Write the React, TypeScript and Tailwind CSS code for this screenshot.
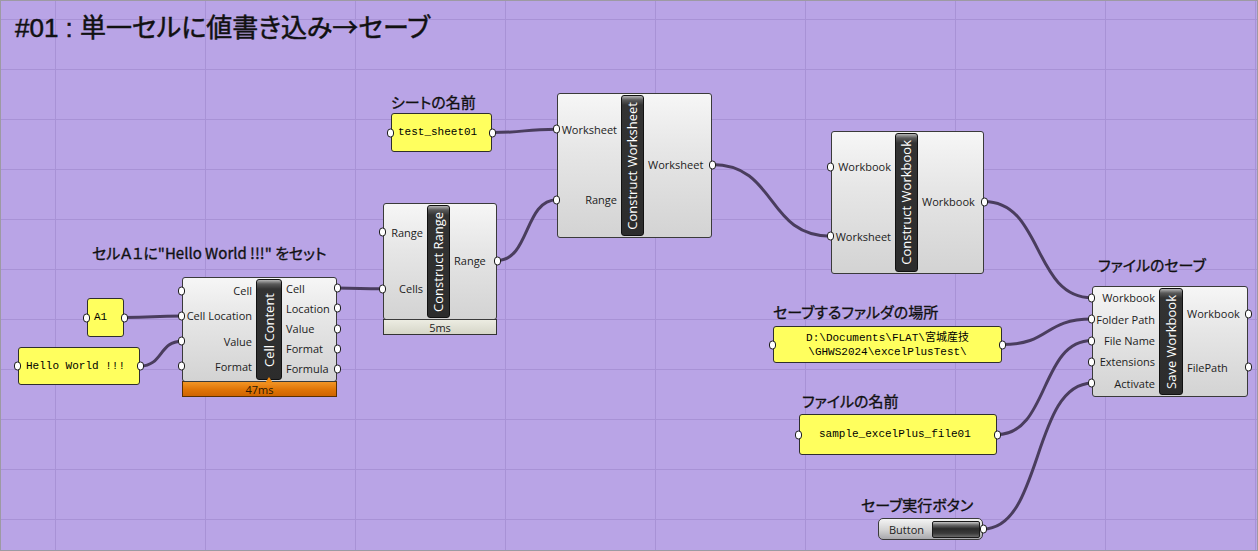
import React from 'react';

type Comp = {
  id: string;
  x: number;
  y: number;
  w: number;
  h: number;
  leftW: number;
  stripW: number;
  title: string;
  inputs: string[];
  outputs: string[];
  bar?: { text: string; kind: 'orange' | 'gray' };
  marker?: boolean;
};

const comps: Comp[] = [
  { id: 'cc', x: 182, y: 277, w: 155, h: 105, leftW: 74, stripW: 26, title: 'Cell Content', inputs: ['Cell', 'Cell Location', 'Value', 'Format'], outputs: ['Cell', 'Location', 'Value', 'Format', 'Formula'], bar: { text: '47ms', kind: 'orange' }, marker: true },
  { id: 'cr', x: 383, y: 203, w: 114, h: 117, leftW: 44, stripW: 23, title: 'Construct Range', inputs: ['Range', 'Cells'], outputs: ['Range'], bar: { text: '5ms', kind: 'gray' } },
  { id: 'cw', x: 557, y: 93, w: 155, h: 145, leftW: 64, stripW: 23, title: 'Construct Worksheet', inputs: ['Worksheet', 'Range'], outputs: ['Worksheet'] },
  { id: 'cb', x: 831, y: 131, w: 153, h: 143, leftW: 64, stripW: 23, title: 'Construct Workbook', inputs: ['Workbook', 'Worksheet'], outputs: ['Workbook'] },
  { id: 'sw', x: 1092, y: 286, w: 156, h: 111, leftW: 67, stripW: 24, title: 'Save Workbook', inputs: ['Workbook', 'Folder Path', 'File Name', 'Extensions', 'Activate'], outputs: ['Workbook', 'FilePath'] },
];

type Panel = { x: number; y: number; w: number; h: number; lines: string[]; pl?: number };

const panels: Panel[] = [
  { x: 391, y: 113, w: 101, h: 39, lines: ['test_sheet01'], pl: 6 },
  { x: 87, y: 298, w: 37, h: 39, lines: ['A1'], pl: 6 },
  { x: 18, y: 347, w: 122, h: 38, lines: ['Hello World !!!'], pl: 7 },
  { x: 773, y: 326, w: 229, h: 37, lines: ['D:\\Documents\\FLAT\\宮城産技', '\\GHWS2024\\excelPlusTest\\'] },
  { x: 799, y: 414, w: 198, h: 41, lines: ['sample_excelPlus_file01'], pl: 19 },
];

const button = { x: 878, y: 518, w: 105, h: 22 };

const scribbles = [
  { x: 391, y: 94, text: 'シートの名前' },
  { x: 92, y: 245, text: 'セルＡ１に"Hello World !!!" をセット' },
  { x: 773, y: 304, text: 'セーブするファルダの場所' },
  { x: 802, y: 393, text: 'ファイルの名前' },
  { x: 861, y: 497, text: 'セーブ実行ボタン' },
  { x: 1098, y: 257, text: 'ファイルのセーブ' },
];

const byId = (id: string) => comps.find((c) => c.id === id)!;
const inPort = (id: string, i: number): [number, number] => {
  const c = byId(id);
  return [c.x, c.y + 1 + ((c.h - 4) * (i + 0.5)) / c.inputs.length];
};
const outPort = (id: string, i: number): [number, number] => {
  const c = byId(id);
  return [c.x + c.w, c.y + 1 + ((c.h - 4) * (i + 0.5)) / c.outputs.length];
};
const panelOut = (i: number): [number, number] => {
  const p = panels[i];
  return [p.x + p.w, p.y + p.h / 2];
};

const wires: [[number, number], [number, number]][] = [
  [panelOut(0), inPort('cw', 0)],
  [outPort('cr', 0), inPort('cw', 1)],
  [panelOut(1), inPort('cc', 1)],
  [panelOut(2), inPort('cc', 2)],
  [outPort('cc', 0), inPort('cr', 1)],
  [outPort('cw', 0), inPort('cb', 1)],
  [outPort('cb', 0), inPort('sw', 0)],
  [panelOut(3), inPort('sw', 1)],
  [panelOut(4), inPort('sw', 2)],
  [[button.x + button.w, button.y + button.h / 2], inPort('sw', 4)],
];

function wirePath([x1, y1]: [number, number], [x2, y2]: [number, number]) {
  const d = Math.max(Math.abs(x2 - x1) * 0.55, 10);
  return `M ${x1} ${y1} C ${x1 + d} ${y1}, ${x2 - d} ${y2}, ${x2} ${y2}`;
}

function Grip({ side }: { side: 'in' | 'out' }) {
  return (
    <div
      className={
        'absolute top-1/2 -translate-y-1/2 w-[7px] h-[9px] rounded-full border-[1.5px] border-[#1e1e1e] bg-white ' +
        (side === 'in' ? 'left-[-5px]' : 'right-[-5px]')
      }
    />
  );
}

function Component({ c }: { c: Comp }) {
  return (
    <div className="absolute flex flex-col" style={{ left: c.x, top: c.y, width: c.w }}>
      <div
        className="relative flex rounded-[3px] border border-[#3a3a3a] bg-[linear-gradient(to_bottom,#f6f6f6,#e6e6e6_40%,#d3d3d3)] font-['Open_Sans',sans-serif] text-[11px] text-[#1c1c1c]"
        style={{ height: c.h }}
      >
        <div className="relative flex flex-col pb-[2px]" style={{ width: c.leftW - 1 }}>
          {c.inputs.map((t) => (
            <div key={t} className="relative flex flex-1 items-center justify-end pr-[4px] whitespace-nowrap leading-none">
              <span>{t}</span>
              <Grip side="in" />
            </div>
          ))}
        </div>
        <div
          className="relative my-[1px] flex items-center justify-center rounded-[3px] border border-[#111] bg-[linear-gradient(to_bottom,#b5b5b5_0px,#5a5a5a_4px,#333333_9px,#2c2c2c)]"
          style={{ width: c.stripW }}
        >
          <span className="[writing-mode:vertical-rl] rotate-180 whitespace-nowrap text-[13px] leading-none text-white">
            {c.title}
          </span>
          {c.marker && (
            <div className="absolute bottom-[-4px] left-1/2 -translate-x-1/2 w-0 h-0 border-l-[4px] border-r-[4px] border-b-[6px] border-l-transparent border-r-transparent border-b-[#f08a10]" />
          )}
        </div>
        <div className="relative flex flex-1 flex-col pb-[2px]">
          {c.outputs.map((t) => (
            <div key={t} className="relative flex flex-1 items-center pl-[4px] whitespace-nowrap leading-none">
              <span>{t}</span>
              <Grip side="out" />
            </div>
          ))}
        </div>
      </div>
      {c.bar && (
        <div
          className={
            "-mt-[1px] flex h-[16px] items-center justify-center border font-['Open_Sans',sans-serif] text-[11px] leading-none " +
            (c.bar.kind === 'orange'
              ? 'border-[#5a3000] bg-[linear-gradient(to_bottom,#f29526,#e07406_55%,#d06400)] text-[#2a1600]'
              : 'border-[#333] bg-[linear-gradient(to_bottom,#ecece2,#d6d6c8)] text-[#222]')
          }
        >
          {c.bar.text}
        </div>
      )}
    </div>
  );
}

function PanelNode({ p }: { p: Panel }) {
  const multi = p.lines.length > 1;
  return (
    <div
      className={
        "absolute flex flex-col justify-center rounded-[3px] border border-[#2e2e2e] bg-[#ffff5e] font-['Liberation_Mono','Noto_Sans_CJK_JP',monospace] text-[11px] text-black " +
        (multi ? 'items-center leading-[14px]' : 'items-start leading-none')
      }
      style={{ left: p.x, top: p.y, width: p.w, height: p.h, paddingLeft: multi ? 0 : p.pl }}
    >
      {p.lines.map((l) => (
        <span key={l} className="whitespace-pre">
          {l}
        </span>
      ))}
      <div className="absolute left-[-5px] top-1/2 -translate-y-1/2 w-[7px] h-[9px] rounded-full border-[1.5px] border-[#1e1e1e] bg-white" />
      <div className="absolute right-[-5px] top-1/2 -translate-y-1/2 w-[7px] h-[9px] rounded-full border-[1.5px] border-[#1e1e1e] bg-white" />
    </div>
  );
}

export default function App() {
  const vLines = Array.from({ length: 9 }, (_, k) => 55 + 150 * k);
  const hLines = Array.from({ length: 11 }, (_, k) => 19 + 50 * k);
  return (
    <div className="relative h-[551px] w-[1258px] overflow-hidden border border-[#9d9aa3] bg-[#b9a4e6]">
      <svg className="absolute left-[-1px] top-[-1px]" width={1258} height={551}>
        {vLines.map((x) => (
          <line key={'v' + x} x1={x + 0.5} y1={0} x2={x + 0.5} y2={551} stroke="#a892d6" strokeWidth={1} />
        ))}
        {hLines.map((y) => (
          <line key={'h' + y} x1={0} y1={y + 0.5} x2={1258} y2={y + 0.5} stroke="#a892d6" strokeWidth={1} />
        ))}
        {wires.map((w, i) => (
          <path key={i} d={wirePath(w[0], w[1])} fill="none" stroke="#4a3d5e" strokeWidth={3} strokeLinecap="round" />
        ))}
      </svg>

      <div className="absolute inset-[-1px]">
        <div className="absolute left-[15px] top-[13px] whitespace-nowrap font-['Liberation_Sans','Noto_Sans_CJK_JP',sans-serif] text-[26px] leading-none text-[#111] [font-feature-settings:'palt'] [-webkit-text-stroke:0.5px_#111]">
          #01 : 単一セルに値書き込み<span className="font-['Noto_Sans_CJK_JP',sans-serif]">→</span>セーブ
        </div>

        {scribbles.map((s) => (
          <div
            key={s.text}
            className="absolute whitespace-nowrap font-['Noto_Sans_CJK_JP','Liberation_Sans',sans-serif] text-[15px] leading-none text-[#111] [font-feature-settings:'palt'] [-webkit-text-stroke:0.35px_#111]"
            style={{ left: s.x, top: s.y }}
          >
            {s.text}
          </div>
        ))}

        {comps.map((c) => (
          <Component key={c.id} c={c} />
        ))}

        {panels.map((p, i) => (
          <PanelNode key={i} p={p} />
        ))}

        <div
          className="absolute flex items-center rounded-[5px] border border-[#3a3a3a] bg-[linear-gradient(to_bottom,#f4f4f4,#d2d2d2_55%,#a8a8ac)] font-['Open_Sans',sans-serif] text-[11px] leading-none text-[#222]"
          style={{ left: button.x, top: button.y, width: button.w, height: button.h }}
        >
          <span className="pl-[10px]">Button</span>
          <div className="ml-auto mr-[2px] h-[17px] w-[48px] rounded-[2px] border border-[#1a1a1a] bg-[linear-gradient(to_bottom,#c8c8c8_0px,#6a6a6a_3px,#2a2a2a_45%,#3a3a3a_75%,#6a6a6a)]" />
          <div className="absolute right-[-5px] top-1/2 -translate-y-1/2 w-[7px] h-[9px] rounded-full border-[1.5px] border-[#1e1e1e] bg-white" />
        </div>
      </div>
    </div>
  );
}
